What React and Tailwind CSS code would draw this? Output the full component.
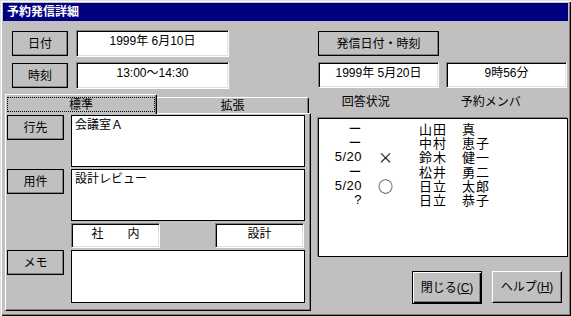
import React from 'react';

const members = [
  { date: 'ー', mark: '', sei: '山田', mei: '真' },
  { date: 'ー', mark: '', sei: '中村', mei: '恵子' },
  { date: '5/20', mark: '×', sei: '鈴木', mei: '健一' },
  { date: 'ー', mark: '', sei: '松井', mei: '勇二' },
  { date: '5/20', mark: '○', sei: '日立', mei: '太郎' },
  { date: '?', mark: '', sei: '日立', mei: '恭子' },
];

function LabelBox({ children, className = '' }) {
  return (
    <div
      className={`flex items-center justify-center border border-black bg-[#c0c0c0] text-[12px] leading-[16px] shadow-[inset_-1px_-1px_0_#808080] ${className}`}
    >
      {children}
    </div>
  );
}

function Field({ children, className = '' }) {
  return (
    <div
      className={`bg-white border border-t-[#808080] border-l-[#808080] border-b-white border-r-white shadow-[inset_1px_1px_0_#000,inset_-1px_-1px_0_#dfdfdf] text-center text-[12px] leading-[16px] pt-[2px] whitespace-pre ${className}`}
    >
      {children}
    </div>
  );
}

function TextArea({ children, className = '' }) {
  return (
    <div className={`bg-white border border-black text-[12px] leading-[16px] pl-[3px] pt-[1px] ${className}`}>
      {children}
    </div>
  );
}

export default function App() {
  return (
    <div className="w-[571px] h-[316px] bg-[#c0c0c0] p-[3px] text-black font-['Liberation_Sans','Noto_Sans_CJK_JP',sans-serif] shadow-[inset_1px_1px_0_#dfdfdf,inset_2px_2px_0_#fff,inset_-1px_-1px_0_#000,inset_-2px_-2px_0_#808080]">
      {/* Title bar */}
      <div className="h-[18px] bg-[#000080] text-white font-bold text-[12px] leading-[18px] pl-[4px]">
        予約発信詳細
      </div>

      <div className="flex h-[292px]">
        {/* Left column */}
        <div className="w-[308px] flex flex-col">
          <div className="flex items-center h-[27px] mt-[9px] pl-[9px]">
            <LabelBox className="w-[56px] h-[25px]">日付</LabelBox>
            <Field className="w-[153px] h-[27px] ml-[8px]">1999年 6月10日</Field>
          </div>
          <div className="flex items-center h-[27px] mt-[5px] pl-[9px]">
            <LabelBox className="w-[56px] h-[25px]">時刻</LabelBox>
            <Field className="w-[153px] h-[27px] ml-[8px]">13:00～14:30</Field>
          </div>

          {/* Tabs */}
          <div className="flex items-end h-[19px] mt-[5px] ml-[2px] text-[12px]">
            <div className="relative z-10 w-[152px] h-[20px] -mb-[1px] bg-[#c0c0c0] border-t border-l border-white border-r border-r-black rounded-tl-[2px] rounded-tr-[2px] shadow-[inset_-1px_0_0_#808080] px-[1px] pt-[2px]">
              <div className="h-[15px] border border-dotted border-black flex items-center justify-center leading-[14px]">
                標準
              </div>
            </div>
            <div className="w-[152px] h-[16px] bg-[#c0c0c0] border-t border-white border-r border-r-black rounded-tr-[2px] shadow-[inset_-1px_0_0_#808080] flex items-center justify-center leading-[14px]">
              拡張
            </div>
          </div>

          {/* Tab panel */}
          <div className="ml-[2px] w-[306px] h-[198px] border border-t-white border-l-white border-b-black border-r-black shadow-[inset_-1px_-1px_0_#808080] pl-[1px] pt-[1px]">
            <div className="flex">
              <LabelBox className="w-[57px] h-[25px]">行先</LabelBox>
              <TextArea className="w-[234px] h-[52px] ml-[7px]">会議室Ａ</TextArea>
            </div>
            <div className="flex mt-[2px]">
              <LabelBox className="w-[57px] h-[25px]">用件</LabelBox>
              <TextArea className="w-[234px] h-[52px] ml-[7px]">設計レビュー</TextArea>
            </div>
            <div className="flex mt-[2px] pl-[64px]">
              <Field className="w-[89px] h-[25px]">社　　内</Field>
              <Field className="w-[89px] h-[25px] ml-[55px]">設計</Field>
            </div>
            <div className="flex mt-[2px]">
              <LabelBox className="w-[57px] h-[25px]">メモ</LabelBox>
              <TextArea className="w-[234px] h-[53px] ml-[7px]" />
            </div>
          </div>
        </div>

        {/* Right column */}
        <div className="w-[250px] ml-[7px] flex flex-col">
          <LabelBox className="w-[121px] h-[25px] mt-[10px]">発信日付・時刻</LabelBox>
          <div className="flex gap-[7px] mt-[6px]">
            <Field className="w-[121px] h-[26px]">1999年 5月20日</Field>
            <Field className="w-[121px] h-[26px]">9時56分</Field>
          </div>
          <div className="flex h-[16px] mt-[6px] text-[12px] leading-[16px]">
            <div className="w-[96px] text-center">回答状況</div>
            <div className="w-[155px] text-center">予約メンバ</div>
          </div>
          <div className="mt-[8px] w-[250px] h-[139px] bg-white border border-black shadow-[-1px_-1px_0_#808080] pt-[3px]">
            {members.map((m, i) => (
              <div key={i} className="flex text-[13px] leading-[14px] h-[14.2px]">
                <div className="w-[43px] text-right tracking-[0.5px]">{m.date}</div>
                <div className="w-[47px] text-center text-[15px] font-['Noto_Sans_CJK_JP',sans-serif]">{m.mark}</div>
                <div className="w-[43px] ml-[10px] tracking-[1px] font-['Noto_Sans_CJK_JP',sans-serif]">{m.sei}</div>
                <div className="tracking-[1px] font-['Noto_Sans_CJK_JP',sans-serif]">{m.mei}</div>
              </div>
            ))}
          </div>
          <div className="flex justify-end gap-[10px] pr-[6px] mt-[14px] text-[12px]">
            <div className="w-[70px] h-[33px] flex items-center justify-center border border-black shadow-[inset_1px_1px_0_#fff,inset_-1px_-1px_0_#000,inset_-2px_-2px_0_#808080]">
              閉じる(<span className="underline">C</span>)
            </div>
            <div className="w-[70px] h-[32px] flex items-center justify-center border border-t-white border-l-white border-b-black border-r-black shadow-[inset_-1px_-1px_0_#808080]">
              ヘルプ(<span className="underline">H</span>)
            </div>
          </div>
        </div>
      </div>
    </div>
  );
}
